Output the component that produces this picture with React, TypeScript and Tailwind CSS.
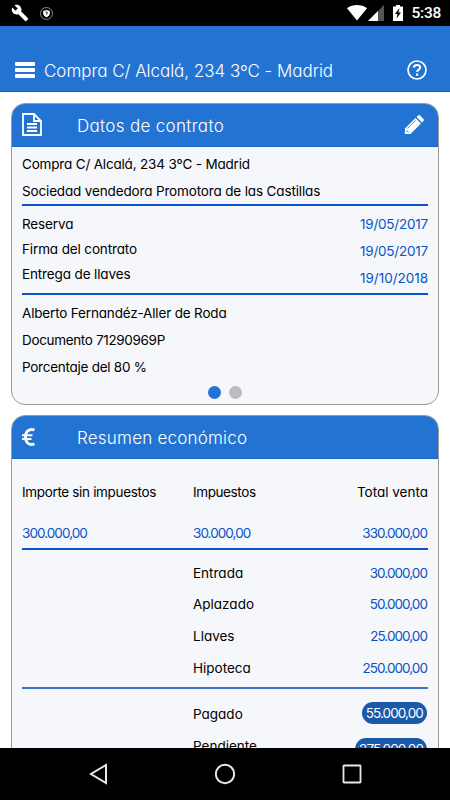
import type { ReactNode } from "react";

const installments = [
  { label: "Entrada", amount: "30.000,00" },
  { label: "Aplazado", amount: "50.000,00" },
  { label: "Llaves", amount: "25.000,00" },
  { label: "Hipoteca", amount: "250.000,00" },
];

function StatusBar() {
  return (
    <div className="flex h-[26px] shrink-0 items-center justify-between bg-black pl-[11px] pr-[9px] text-white">
      <div className="flex items-center gap-[11px]">
        <svg width="18" height="18" viewBox="0 0 24 24" fill="currentColor">
          <path d="M22.7 19l-9.1-9.1c.9-2.3.4-5-1.5-6.9-2-2-5-2.4-7.4-1.3L9 6 6 9 1.6 4.7C.4 7.1.9 10.1 2.9 12.1c1.9 1.9 4.6 2.4 6.9 1.5l9.1 9.1c.4.4 1 .4 1.4 0l2.3-2.3c.5-.4.5-1.1.1-1.4z" />
        </svg>
        <svg width="13" height="13" viewBox="0 0 13 13" fill="none">
          <circle cx="6.5" cy="6.5" r="6" stroke="#aaa" strokeWidth="0.8" />
          <path d="M6.5 3l3.3 1v2.3c0 2-1.4 3.2-3.3 4.1-1.9-.9-3.3-2.1-3.3-4.1V4z" fill="white" />
          <path d="M5.4 5.2h2L6.5 7.8" stroke="#333" strokeWidth="1" />
        </svg>
      </div>
      <div className="flex items-center">
        <svg width="20" height="16" viewBox="0 0 20 16" fill="currentColor">
          <path d="M0 3.3C5.5-1 14.5-1 20 3.3L10 15.5z" />
        </svg>
        <svg className="ml-[1px]" width="16" height="16" viewBox="0 0 16 16">
          <path d="M0 16L16 0v16z" fill="#555" />
          <path d="M0 16L10 6v10z" fill="white" />
        </svg>
        <svg className="ml-[9px]" width="10" height="16" viewBox="0 0 10 16">
          <path d="M0 1.5h3V0h4v1.5h3V16H0z" fill="white" />
          <path d="M6.5 3L2 9h2.5L3.5 13.5 8 7.5H5.5z" fill="black" />
        </svg>
        <span className="ml-[8px] pt-[2px] font-['Roboto'] text-[15.5px] font-medium leading-none tracking-[-0.25px]">5:38</span>
      </div>
    </div>
  );
}

type CardProps = {
  icon: ReactNode;
  title: ReactNode;
  action?: ReactNode;
  children: ReactNode;
};

function Card({ icon, title, action, children }: CardProps) {
  return (
    <section className="overflow-hidden rounded-[14px] border border-[#999] bg-[#f5f7fa]">
      <header className="flex h-[43px] items-center border-b border-[#1768cd] bg-[#2374d2] pl-[10px] pr-[14px] text-white">
        <div className="w-[55px]">{icon}</div>
        <h2 className="grow pt-[3px] text-[17px] font-light tracking-[0.32px]">{title}</h2>
        {action}
      </header>
      <div className="px-[10px]">{children}</div>
    </section>
  );
}

function ContractCard() {
  return (
    <Card
      title="Datos de contrato"
      icon={
        <svg width="20" height="24" viewBox="0 0 20 24" fill="none" stroke="white" strokeWidth="1.8">
          <path d="M1 1h11l7 7v14H1zM12 1v7h7M5 11h10M5 14.5h10M5 18h10" />
        </svg>
      }
      action={
        <svg width="20" height="20" viewBox="0 0 20 20" fill="white">
          <path d="M1 13.5L11.5 3l5.5 5.5L6.5 19H.8z" />
          <path d="M12.5 2l1.6-1.5q1-.8 2 0L19.5 4q.8 1 0 1.800L18 7.5z" />
          <path d="M3.5 13.5l8-8M2 15l2.5 2.5" stroke="#2374d2" strokeWidth="0.8" />
        </svg>
      }
    >
      <div className="h-[57px] pt-[4px] leading-[27px]">
        <p className="tracking-[-0.18px]">Compra C/ Alcalá, 234 3ºC - Madrid</p>
        <p className="tracking-[-0.15px]">Sociedad vendedora Promotora de las Castillas</p>
      </div>
      <div className="flex h-[91px] justify-between border-y-2 border-[#0754c8]">
        <div className="pt-[6px] leading-[25px] tracking-[-0.13px]">
          <p>Reserva</p>
          <p>Firma del contrato</p>
          <p>Entrega de llaves</p>
        </div>
        <div className="pt-[5px] text-right leading-[27px] tracking-[-0.22px] text-[#0754c8]">
          <p>19/05/2017</p>
          <p>19/05/2017</p>
          <p className="tracking-[-0.02px]">19/10/2018</p>
        </div>
      </div>
      <div className="pt-[5px] leading-[27px]">
        <p className="tracking-[-0.17px]">Alberto Fernandéz-Aller de Roda</p>
        <p className="tracking-[-0.34px]">Documento 71290969P</p>
        <p className="tracking-[-0.26px]">Porcentaje del 80 %</p>
      </div>
      <div className="flex h-[23px] justify-center gap-[8px] pt-[5px]">
        <span className="h-[13px] w-[13px] rounded-full bg-[#2374d2]" />
        <span className="h-[13px] w-[13px] rounded-full bg-[#bdbdbd]" />
      </div>
    </Card>
  );
}

function Pill({ children }: { children: ReactNode }) {
  return (
    <span className="mr-px h-[22px] rounded-full bg-[#1b59aa] pl-[4px] pr-[4px] leading-[22px] tracking-[-0.9px] text-white">
      {children}
    </span>
  );
}

function SummaryCard() {
  return (
    <Card
      title={<span className="tracking-[0.22px]">Resumen económico</span>}
      icon={
        <svg width="13" height="18" viewBox="0 0 13 18" fill="none" stroke="white" strokeWidth="2.8">
          <path d="M12.5 2C7 .2 3.5 3.5 3.5 9s3.5 8.8 9 7" />
          <path d="M0 7.2h10.5M0 11h9.5" strokeWidth="1.9" />
        </svg>
      }
    >
      <div className="grid h-[91px] grid-cols-[171px_1fr_auto] content-start border-b-2 border-[#0754c8] pt-[23px] leading-[20px]">
        <p className="tracking-[-0.34px]">Importe sin impuestos</p>
        <p className="tracking-[-0.4px]">Impuestos</p>
        <p className="text-right">Total venta</p>
        <p className="pt-[21px] tracking-[-0.95px] text-[#0754c8]">300.000,00</p>
        <p className="pt-[21px] tracking-[-0.95px] text-[#0754c8]">30.000,00</p>
        <p className="pr-px pt-[21px] text-right tracking-[-0.95px] text-[#0754c8]">330.000,00</p>
      </div>
      <div className="border-b-2 border-[#3b72ca] pb-[3px] pt-[7px]">
        {installments.map((item) => (
          <div key={item.label} className="flex h-[31.7px] items-center justify-between pl-[171px]">
            <span>{item.label}</span>
            <span className="pr-px tracking-[-0.95px] text-[#0754c8]">{item.amount}</span>
          </div>
        ))}
      </div>
      <div className="flex justify-between pl-[171px] pt-[13px]">
        <div className="flex flex-col leading-[32px]">
          <span className="-mt-[4px]">Pagado</span>
          <span>Pendiente</span>
        </div>
        <div className="flex flex-col items-end gap-[14px]">
          <Pill>55.000,00</Pill>
          <Pill>275.000,00</Pill>
        </div>
      </div>
    </Card>
  );
}

export default function App() {
  return (
    <div className="flex h-[800px] w-[450px] flex-col overflow-hidden bg-white font-['Inter','Liberation_Sans',sans-serif] text-[13.5px] text-black [font-feature-settings:'cv11']">
      <StatusBar />
      <header className="flex h-[66px] shrink-0 items-center border-b border-[#1768cd] bg-[#2374d2] pl-[15px] pr-[23px] pt-[23px] text-white">
        <div className="flex w-[29px] flex-col gap-[2px]">
          <span className="h-[4px] w-[20px] rounded-[1px] bg-white" />
          <span className="h-[4px] w-[20px] rounded-[1px] bg-white" />
          <span className="h-[4px] w-[20px] rounded-[1px] bg-white" />
        </div>
        <h1 className="grow pt-[3px] text-[17px] font-light tracking-[-0.03px]">Compra C/ Alcalá, 234 3ºC - Madrid</h1>
        <svg width="20" height="20" viewBox="0 0 20 20" fill="none" stroke="white">
          <circle cx="10" cy="10" r="9" strokeWidth="1.7" />
          <path d="M6.9 7.6c.2-3.5 6.3-3.3 6.3 0 0 2-3.1 2.1-3.1 4.5" strokeWidth="2" />
          <path d="M10.1 13.6v2.1" strokeWidth="2.2" />
        </svg>
      </header>
      <main className="flex min-h-0 grow flex-col gap-[10px] overflow-hidden px-[11px] pt-[11px]">
        <div className="shrink-0">
          <ContractCard />
        </div>
        <div className="shrink-0">
          <SummaryCard />
        </div>
      </main>
      <nav className="flex h-[52px] shrink-0 items-center justify-between bg-black pl-[88px] pr-[88px]">
        <svg width="20" height="22" viewBox="0 0 20 22" fill="none" stroke="#e8e8e8" strokeWidth="2">
          <path d="M18 2v18L3 11z" />
        </svg>
        <svg width="22" height="22" viewBox="0 0 22 22" fill="none" stroke="#e8e8e8" strokeWidth="2">
          <circle cx="11" cy="11" r="9.2" />
        </svg>
        <svg width="20" height="20" viewBox="0 0 20 20" fill="none" stroke="#e8e8e8" strokeWidth="1.8">
          <rect x="1.5" y="1.5" width="17" height="17" rx="0.5" />
        </svg>
      </nav>
    </div>
  );
}
